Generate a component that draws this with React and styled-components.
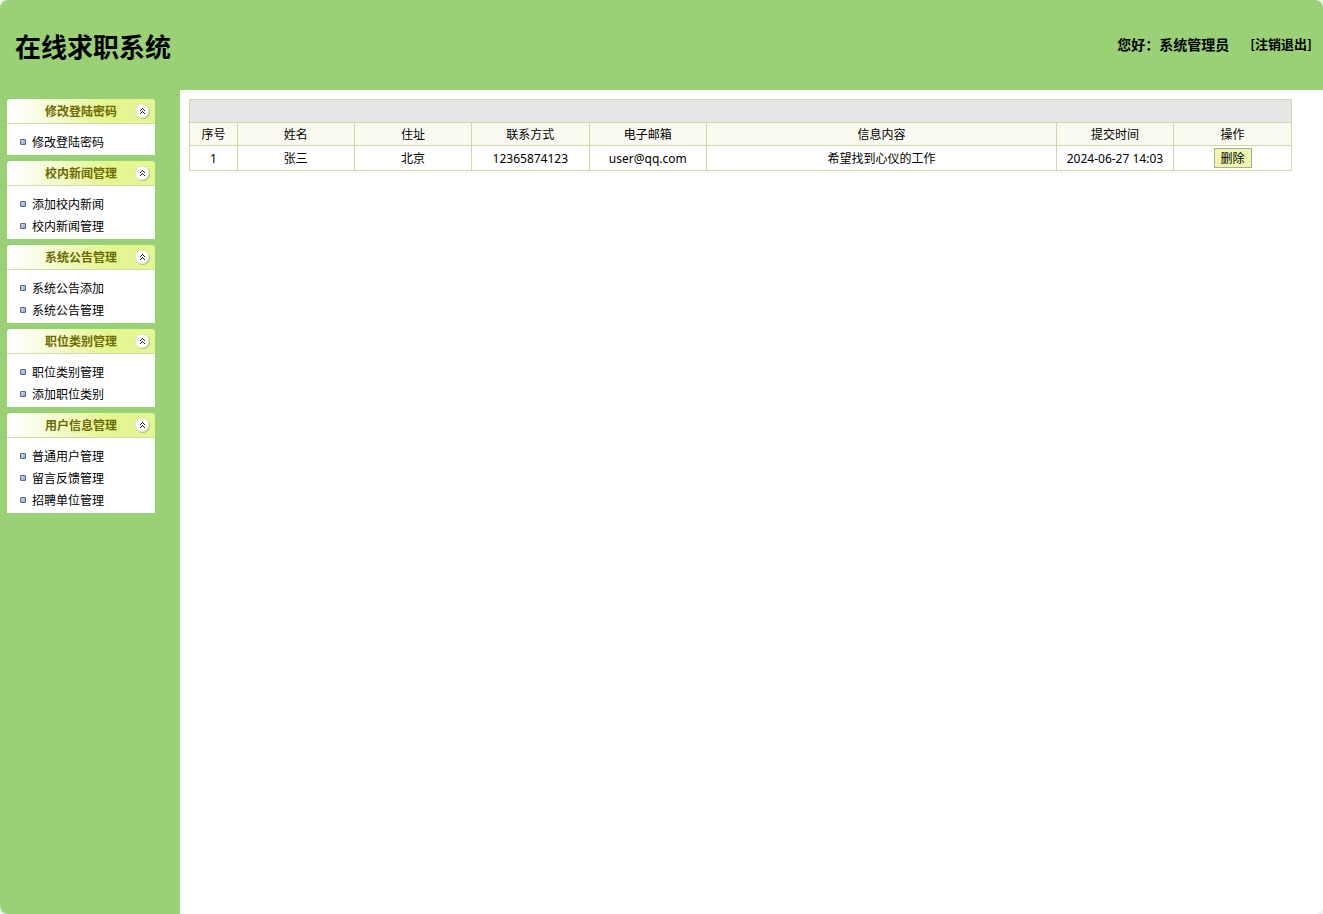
import React from "react";
import styled, { createGlobalStyle } from "styled-components";

const GlobalStyle = createGlobalStyle`
  * { box-sizing: border-box; }
  html { background: #f0f0f0; }
  body {
    margin: 0;
    font-family: "Noto Sans", "Noto Sans CJK SC", sans-serif;
    font-size: 12px;
    color: #000;
  }
`;

const Page = styled.div`
  display: flex;
  flex-direction: column;
  min-height: 100vh;
  border-radius: 8px;
  overflow: hidden;
  background: #fff;
`;

const Header = styled.header`
  display: flex;
  align-items: center;
  justify-content: space-between;
  height: 90px;
  padding: 0 11px 2px 15px;
  background: #9ad177;
`;

const Title = styled.h1`
  margin: 0;
  padding-top: 4px;
  font-family: "Noto Sans CJK SC", sans-serif;
  font-size: 26px;
  line-height: 36px;
  font-weight: 700;
`;

const Account = styled.div`
  display: flex;
  align-items: center;
  gap: 21px;
  font-family: "Noto Sans CJK SC", sans-serif;
  font-size: 14px;
  line-height: 20px;
  font-weight: 700;
`;

const Logout = styled.a`
  font-size: 13px;
  color: inherit;
  text-decoration: none;
`;

const Body = styled.div`
  display: flex;
  flex: 1;
`;

const Sidebar = styled.nav`
  display: flex;
  flex-direction: column;
  gap: 6px;
  flex: 0 0 180px;
  padding: 9px 25px 9px 7px;
  background: #9ad177;
`;

const Group = styled.section`
  background: #fff;
  border-radius: 4px 4px 0 0;
`;

const GroupHeader = styled.button`
  display: flex;
  align-items: center;
  justify-content: space-between;
  width: 100%;
  height: 25px;
  padding: 0 4px 0 38px;
  border: 0;
  border-bottom: 1px solid #d3d8ad;
  border-radius: 4px 4px 0 0;
  background: linear-gradient(to right, #fff 5%, #e5f591 68%);
  font-family: inherit;
  font-size: 12px;
  line-height: 20px;
  font-weight: 700;
  color: #6b6b00;
  cursor: pointer;
`;

const GroupTitle = styled.span`
  padding-top: 2px;
`;

const Links = styled.ul`
  margin: 0;
  padding: 7px 0 2px 13px;
  list-style: none;
`;

const LinkItem = styled.li`
  display: flex;
  align-items: center;
  gap: 6px;
  height: 22px;
  line-height: 20px;

  a {
    padding-top: 2px;
    color: inherit;
    text-decoration: none;
  }
`;

const Bullet = styled.span`
  width: 6px;
  height: 6px;
  border: 1px solid #58677f;
  border-radius: 1px;
  background: linear-gradient(135deg, #c5dcfa, #83abec);
`;

const Main = styled.main`
  flex: 1;
  min-width: 0;
  padding: 9px 31px 9px 9px;
`;

const Table = styled.table`
  width: 100%;
  table-layout: fixed;
  border-collapse: collapse;
  line-height: 18px;
  text-align: center;

  th,
  td {
    height: 23px;
    padding: 2px 0 0;
    border: 1px solid #d1d9ac;
    font-weight: 400;
    white-space: nowrap;
  }

  th {
    background: #fafaf1;
  }

  tbody td {
    height: 25px;
  }

  tbody td:last-child {
    padding: 0;
  }
`;

const Column = styled.col`
  width: ${({ $share }) => $share}%;
`;

const ToolbarCell = styled.td`
  background: #e6e6e6;
`;

const DeleteButton = styled.button`
  display: block;
  width: 38px;
  height: 20px;
  margin: 0 auto;
  padding: 2px 0 0;
  border: 1px solid #a9ac96;
  background: #eef6b0;
  font-family: inherit;
  font-size: 12px;
  line-height: 16px;
  color: #000;
  cursor: pointer;
`;

const CollapseIcon = () => (
  <svg width="17" height="16" viewBox="0 0 17 16" aria-hidden="true">
    <circle cx="9" cy="9" r="7" fill="#9ca074" opacity="0.65" />
    <circle cx="8" cy="8" r="7" fill="#fff" stroke="#c9cba8" strokeWidth="0.5" />
    <path
      d="M8 5h1v1h-1z M7 6h1v1h-1z M9 6h1v1h-1z M6 7h1v1h-1z M10 7h1v1h-1z M8 8h1v1h-1z M7 9h1v1h-1z M9 9h1v1h-1z M6 10h1v1h-1z M10 10h1v1h-1z"
      fill="#222"
      shapeRendering="crispEdges"
    />
  </svg>
);

const menu = [
  { title: "修改登陆密码", links: ["修改登陆密码"] },
  { title: "校内新闻管理", links: ["添加校内新闻", "校内新闻管理"] },
  { title: "系统公告管理", links: ["系统公告添加", "系统公告管理"] },
  { title: "职位类别管理", links: ["职位类别管理", "添加职位类别"] },
  { title: "用户信息管理", links: ["普通用户管理", "留言反馈管理", "招聘单位管理"] },
];

const columns = [
  { label: "序号", share: 4.34 },
  { label: "姓名", share: 10.62 },
  { label: "住址", share: 10.64 },
  { label: "联系方式", share: 10.66 },
  { label: "电子邮箱", share: 10.66 },
  { label: "信息内容", share: 31.74 },
  { label: "提交时间", share: 10.64 },
  { label: "操作", share: 10.7 },
];

const rows = [
  ["1", "张三", "北京", "12365874123", "user@qq.com", "希望找到心仪的工作", "2024-06-27 14:03"],
];

export default function App() {
  return (
    <>
      <GlobalStyle />
      <Page>
        <Header>
          <Title>在线求职系统</Title>
          <Account>
            <span>您好：系统管理员</span>
            <Logout href="#logout">[注销退出]</Logout>
          </Account>
        </Header>
        <Body>
          <Sidebar>
            {menu.map((group) => (
              <Group key={group.title}>
                <GroupHeader type="button" aria-expanded="true">
                  <GroupTitle>{group.title}</GroupTitle>
                  <CollapseIcon />
                </GroupHeader>
                <Links>
                  {group.links.map((link) => (
                    <LinkItem key={link}>
                      <Bullet />
                      <a href="#page">{link}</a>
                    </LinkItem>
                  ))}
                </Links>
              </Group>
            ))}
          </Sidebar>
          <Main>
            <Table>
              <colgroup>
                {columns.map((column) => (
                  <Column key={column.label} $share={column.share} />
                ))}
              </colgroup>
              <thead>
                <tr>
                  <ToolbarCell colSpan={columns.length} />
                </tr>
                <tr>
                  {columns.map((column) => (
                    <th key={column.label} scope="col">{column.label}</th>
                  ))}
                </tr>
              </thead>
              <tbody>
                {rows.map((row) => (
                  <tr key={row[0]}>
                    {row.map((value, index) => (
                      <td key={index}>{value}</td>
                    ))}
                    <td>
                      <DeleteButton type="button">删除</DeleteButton>
                    </td>
                  </tr>
                ))}
              </tbody>
            </Table>
          </Main>
        </Body>
      </Page>
    </>
  );
}
